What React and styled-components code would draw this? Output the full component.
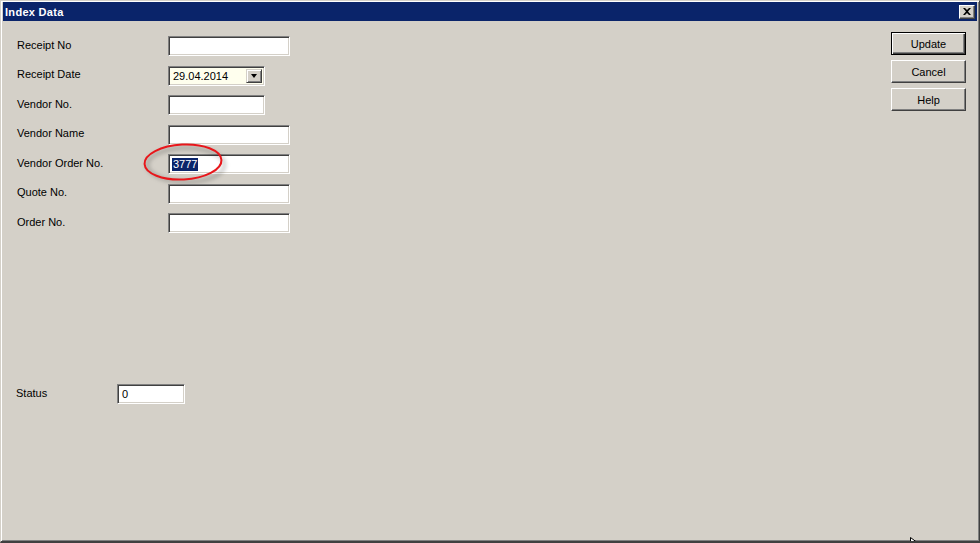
import React from "react";
import styled, { createGlobalStyle } from "styled-components";

const GlobalStyle = createGlobalStyle`
  html, body {
    margin: 0;
    padding: 0;
    background: #d4d0c8;
  }
  body {
    font-family: Tahoma, "Liberation Sans", Arial, sans-serif;
    font-size: 11px;
    color: #000;
  }
`;

const Window = styled.div`
  position: relative;
  width: 980px;
  height: 543px;
  box-sizing: border-box;
  display: flex;
  flex-direction: column;
  background: #d4d0c8;
  border-top: 1px solid #d4d0c8;
  border-left: 1px solid #d4d0c8;
  border-right: 1px solid #404040;
  border-bottom: 2px solid #404040;
  box-shadow: inset 1px 1px #fff, inset -1px -1px #808080;
  padding: 1px 2px 1px 2px;
  overflow: hidden;
`;

const TitleBar = styled.div`
  height: 19px;
  display: flex;
  align-items: center;
  justify-content: space-between;
  background: #0a246a;
  padding: 0 2px 0 2px;
`;

const Title = styled.span`
  color: #fff;
  font-weight: bold;
  font-size: 11px;
  letter-spacing: 0.3px;
`;

const CloseBox = styled.div`
  width: 16px;
  height: 14px;
  box-sizing: border-box;
  background: #d4d0c8;
  border: 1px solid;
  border-color: #fff #404040 #404040 #fff;
  box-shadow: inset -1px -1px #808080;
  display: flex;
  align-items: center;
  justify-content: center;
`;

const Body = styled.div`
  flex: 1;
  display: flex;
  justify-content: space-between;
`;

const FormArea = styled.div`
  display: flex;
  flex-direction: column;
  padding: 15px 0 0 14px;
`;

const FieldGrid = styled.div`
  display: grid;
  grid-template-columns: 151px auto;
  grid-auto-rows: 20px;
  row-gap: 9.5px;
  align-items: center;
`;

const Label = styled.span`
  line-height: 20px;
  margin-top: -3px;
`;

const Field = styled.div`
  position: relative;
  width: ${(p) => p.$w}px;
  height: 20px;
  box-sizing: border-box;
  background: ${(p) => p.$bg || "#fff"};
  border: 1px solid;
  border-color: #808080 #fff #fff #808080;
  box-shadow: inset 1px 1px #404040, inset -1px -1px #d4d0c8;
  display: flex;
  align-items: center;
  padding-left: 4px;
`;

const Selected = styled.span`
  background: #0a246a;
  color: #fff;
  line-height: 13px;
  padding: 0 1px;
  margin-left: -1px;
`;

const DropButton = styled.div`
  position: absolute;
  right: 2px;
  top: 2px;
  width: 16px;
  height: 14px;
  box-sizing: border-box;
  background: #d4d0c8;
  border: 1px solid;
  border-color: #d4d0c8 #404040 #404040 #d4d0c8;
  box-shadow: inset 1px 1px #fff, inset -1px -1px #808080;
  display: flex;
  align-items: center;
  justify-content: center;
`;

const Arrow = styled.div`
  width: 0;
  height: 0;
  border-left: 3.5px solid transparent;
  border-right: 3.5px solid transparent;
  border-top: 4px solid #000;
`;

const Ring = styled.svg`
  position: absolute;
  left: -25px;
  top: -12px;
  overflow: visible;
  pointer-events: none;
`;

const StatusRow = styled.div`
  display: flex;
  align-items: center;
  margin-top: 151px;
  margin-left: -1px;
`;

const StatusLabel = styled.span`
  width: 101px;
  margin-top: -2px;
`;

const ButtonColumn = styled.div`
  display: flex;
  flex-direction: column;
  gap: 5px;
  padding: 11px 11px 0 0;
`;

const Button = styled.div`
  width: 75px;
  height: 23px;
  box-sizing: border-box;
  display: flex;
  align-items: center;
  justify-content: center;
  background: #d4d0c8;
  border: 1px solid;
  border-color: ${(p) => (p.$default ? "#000" : "#fff #404040 #404040 #fff")};
  box-shadow: ${(p) =>
    p.$default
      ? "inset 1px 1px #fff, inset -1px -1px #404040, inset -2px -2px #808080"
      : "inset -1px -1px #808080"};
  font-size: 11px;
`;

const Cursor = styled.svg`
  position: absolute;
  left: 909px;
  top: 536px;
`;

const fields = [
  { label: "Receipt No", w: 122 },
  { label: "Receipt Date", w: 97, combo: "29.04.2014" },
  { label: "Vendor No.", w: 97 },
  { label: "Vendor Name", w: 122 },
  { label: "Vendor Order No.", w: 122, selected: "3777" },
  { label: "Quote No.", w: 122 },
  { label: "Order No.", w: 122 },
];

export default function App() {
  return (
    <>
      <GlobalStyle />
      <Window>
        <TitleBar>
          <Title>Index Data</Title>
          <CloseBox>
            <svg width="8" height="7" viewBox="0 0 8 7">
              <path d="M0 0h2l2 2 2-2h2L5 3.5 8 7H6L4 5 2 7H0l3-3.5z" fill="#000" />
            </svg>
          </CloseBox>
        </TitleBar>
        <Body>
          <FormArea>
            <FieldGrid>
              {fields.map((f) => (
                <React.Fragment key={f.label}>
                  <Label>{f.label}</Label>
                  <Field $w={f.w} $bg={f.combo ? "#ffffee" : undefined}>
                    {f.combo && (
                      <>
                        <span>{f.combo}</span>
                        <DropButton>
                          <Arrow />
                        </DropButton>
                      </>
                    )}
                    {f.selected && (
                      <>
                        <Selected>{f.selected}</Selected>
                        <Ring width="80" height="38" viewBox="0 0 80 38">
                          <defs>
                            <filter id="sh" x="-20%" y="-30%" width="140%" height="170%">
                              <feGaussianBlur stdDeviation="2" />
                            </filter>
                          </defs>
                          <ellipse
                            cx="42"
                            cy="22"
                            rx="38.5"
                            ry="17"
                            fill="none"
                            stroke="rgba(0,0,0,0.25)"
                            strokeWidth="3"
                            filter="url(#sh)"
                          />
                          <ellipse
                            cx="39"
                            cy="19"
                            rx="38.5"
                            ry="17.5"
                            fill="none"
                            stroke="#e8161b"
                            strokeWidth="2"
                            transform="rotate(-3 39 19)"
                          />
                        </Ring>
                      </>
                    )}
                  </Field>
                </React.Fragment>
              ))}
            </FieldGrid>
            <StatusRow>
              <StatusLabel>Status</StatusLabel>
              <Field $w={68}>0</Field>
            </StatusRow>
          </FormArea>
          <ButtonColumn>
            <Button $default>Update</Button>
            <Button>Cancel</Button>
            <Button>Help</Button>
          </ButtonColumn>
        </Body>
        <Cursor width="12" height="10" viewBox="0 0 12 10">
          <path d="M0.5 0.5V10L3 7.5 5 10h2L5 6.5h3.5z" fill="#fff" stroke="#000" strokeWidth="1" />
        </Cursor>
      </Window>
    </>
  );
}
